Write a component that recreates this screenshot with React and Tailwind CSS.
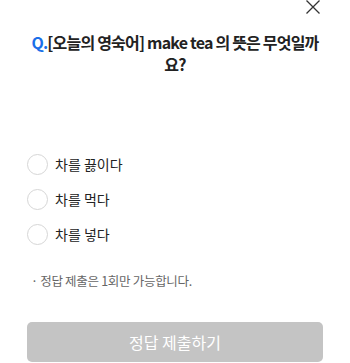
export default function App() {
  const opts = ["차를 끓이다", "차를 먹다", "차를 넣다"];
  return (
    <div className="relative w-[350px] h-[363px] bg-white overflow-hidden" style={{ fontFamily: '"Noto Sans CJK KR", "Noto Sans", sans-serif' }}>
      <button className="absolute right-[29px] top-[0px] w-[16px] h-[16px]">
        <svg width="16" height="16" viewBox="0 0 16 16"><path d="M1.5 0.5 L14.5 13.5 M14.5 0.5 L1.5 13.5" stroke="#333" strokeWidth="1.3" fill="none" /></svg>
      </button>
      <div className="pt-[31px] px-[30px]">
        <h2 className="text-center text-[16px] font-bold leading-[22px] text-[#222] tracking-[-0.8px]">
          <span className="text-[#1a6fe8]">Q.</span>[오늘의 영숙어] make tea 의 뜻은 무엇일까요?
        </h2>
      </div>
      <div className="mt-[79px] px-[27px] flex flex-col gap-[14px]">
        {opts.map((o) => (
          <label key={o} className="flex items-center gap-[7px] h-[21px]">
            <span className="w-[21px] h-[21px] rounded-full border border-[#d6d6d6] bg-white shrink-0" />
            <span className="text-[14px] text-[#222]">{o}</span>
          </label>
        ))}
      </div>
      <p className="mt-[27px] px-[31px] text-[12.5px] text-[#666] tracking-[-0.3px]">· 정답 제출은 1회만 가능합니다.</p>
      <div className="px-[27px] mt-[31px]">
        <button className="w-full h-[40px] rounded-[5px] bg-[#c4c4c4] text-white text-[16px]">정답 제출하기</button>
      </div>
    </div>
  );
}
